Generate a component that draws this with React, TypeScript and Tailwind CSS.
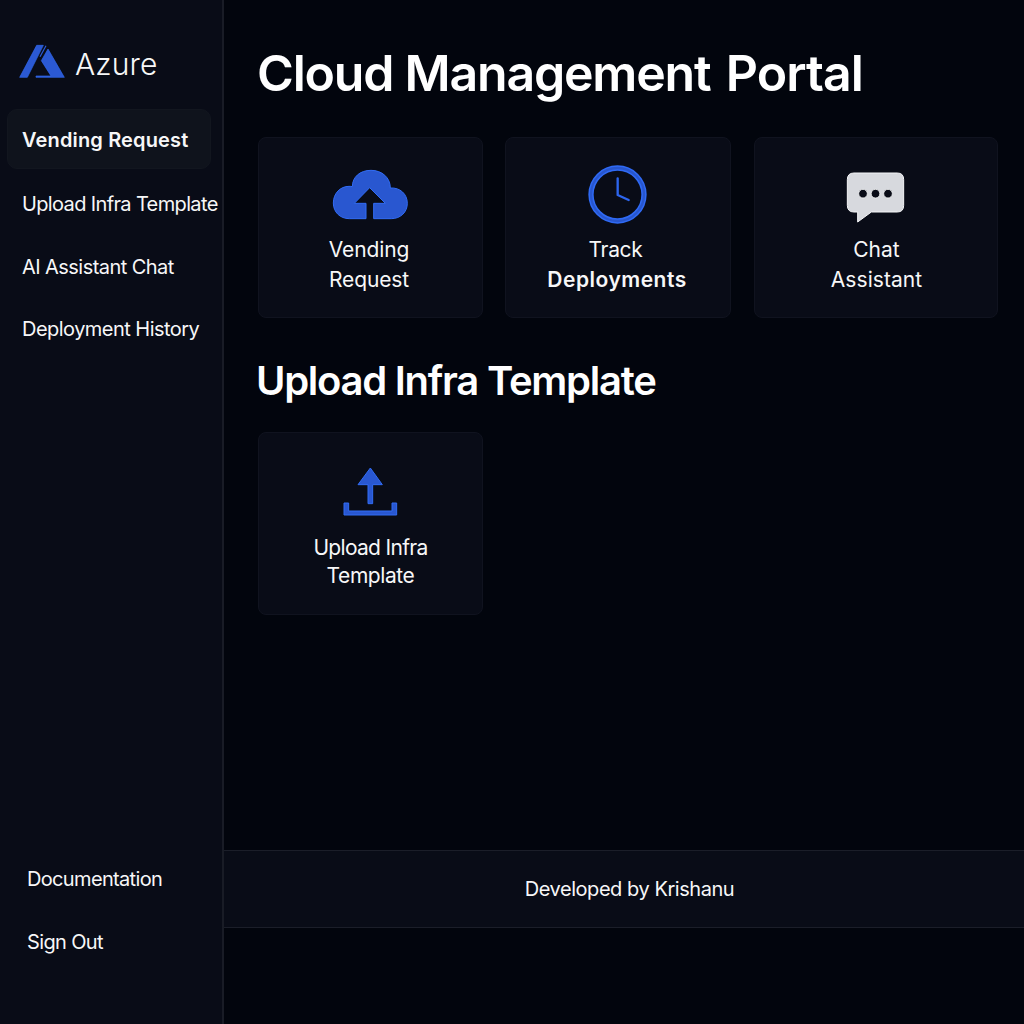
import type { ReactNode } from "react";

const LogoIcon = () => (
  <svg width="46" height="34" viewBox="56 42 138 102" className="shrink-0">
    <g fill="#2b59d3" stroke="#3069f0" strokeWidth="2">
      <path d="M109 46H129L81 142H58Z" />
      <path d="M143 57L192 142H107V138H152L123 92Z" />
    </g>
    <path d="M137 47L119 80" stroke="#2c5cdb" strokeWidth="3.5" fill="none" />
  </svg>
);

const CloudIcon = () => (
  <svg width="77" height="51" viewBox="246 117 231 153">
    <path
      d="M348 266H298C270 266 250 246 250 219C250 190 271 169 297 169C301 169 304 169 307 170C307 141 330 121 363 121C396 121 421 143 421 174C450 172 472 192 472 220C472 246 452 266 424 266H371V220H406L359 173L313 220H348Z"
      fill="#2957d0"
      stroke="#316cf5"
      strokeWidth="3"
    />
  </svg>
);

const ClockIcon = () => (
  <svg width="59" height="59" viewBox="264 105 177 177" fill="none">
    <circle cx="352.5" cy="193.5" r="79.5" stroke="#2f6af5" strokeWidth="16" />
    <circle cx="352.5" cy="193.5" r="79.5" stroke="#2856cd" strokeWidth="7" />
    <path d="M353 145V195L386 210" stroke="#2d65ee" strokeWidth="7" strokeLinecap="round" strokeLinejoin="round" />
  </svg>
);

const ChatIcon = () => (
  <svg width="59" height="51" viewBox="288 125 177 153">
    <path
      d="M312 128H442Q461 128 461 148V225Q461 245 442 245H364L323 275V245H312Q292 245 292 225V148Q292 128 312 128Z"
      fill="#d7d9de"
      stroke="#f4f5f7"
      strokeWidth="3"
    />
    <g fill="#090c17" stroke="#f4f5f7" strokeWidth="2.5">
      <circle cx="339" cy="190" r="13" />
      <circle cx="376.5" cy="190" r="13" />
      <circle cx="414" cy="190" r="13" />
    </g>
  </svg>
);

const UploadIcon = () => (
  <svg width="55" height="51" viewBox="279 124 165 153">
    <g fill="#2957d0" stroke="#316cf5" strokeWidth="3">
      <path d="M361 130L397 180H368V237H354V180H324Z" />
      <path d="M282 235H296V259H426V235H440V271H282Z" />
    </g>
  </svg>
);

function Card({
  icon,
  size,
  iconTop,
  children,
}: {
  icon: ReactNode;
  size: string;
  iconTop: string;
  children: ReactNode;
}) {
  return (
    <button
      className={`flex flex-col items-center justify-start rounded-lg border border-[#10131f] bg-[#090c17] text-[21px] ${size}`}
    >
      <span className={`flex h-[97px] shrink-0 items-start ${iconTop}`}>{icon}</span>
      {children}
    </button>
  );
}

export default function App() {
  return (
    <div className="flex h-[1024px] w-[1024px] overflow-hidden bg-[#02050d] font-['Inter',sans-serif] text-[#f7f7f8]">
      <aside className="flex w-[224px] shrink-0 flex-col border-r-2 border-[#191c26] bg-[#090c17] text-xl leading-[30px] whitespace-nowrap">
        <div className="flex h-[109px] items-start gap-2.5 pt-11 pl-[19px]">
          <LogoIcon />
          <span className="pt-0.5 text-[30px] leading-9 font-light tracking-[0.15px]">Azure</span>
        </div>
        <nav className="flex flex-col">
          <a className="ml-[7px] flex h-[60px] w-[204px] items-center rounded-[10px] border border-[#12161f] bg-[#0f131c] pt-0.5 pl-[14px] font-semibold tracking-[0.15px]">
            Vending Request
          </a>
          <a className="mt-5 pl-[22px] tracking-[-0.64px]">Upload Infra Template</a>
          <a className="mt-[33px] pl-[22px] tracking-[-0.56px]">AI Assistant Chat</a>
          <a className="mt-8 pl-[22px] tracking-[-0.53px]">Deployment History</a>
        </nav>
        <div className="mt-auto flex flex-col gap-[33px] pb-[67px] pl-[27px]">
          <a className="tracking-[-0.66px]">Documentation</a>
          <a className="tracking-[-0.64px]">Sign Out</a>
        </div>
      </aside>

      <main className="flex flex-1 flex-col">
        <div className="flex-1 pl-[34px]">
          <h1 className="-ml-px pt-[43px] text-[50px] leading-[60px] font-semibold tracking-[-1.2px] whitespace-nowrap text-white">
            Cloud Management <span className="ml-1 tracking-[-0.95px]">Portal</span>
          </h1>
          <div className="mt-[34px] flex leading-[30px]">
            <Card icon={<CloudIcon />} size="h-[181px] w-[225px]" iconTop="pt-[31px]">
              <span className="pr-[3px] tracking-[-0.1px]">
                Vending
                <br />
                Request
              </span>
            </Card>
            <Card icon={<ClockIcon />} size="ml-[22px] h-[181px] w-[226px]" iconTop="pt-[27px] pr-0.5">
              <span className="pr-[5px] tracking-[-0.3px]">Track</span>
              <span className="pr-0.5 font-semibold tracking-[0.5px]">Deployments</span>
            </Card>
            <Card icon={<ChatIcon />} size="ml-[23px] h-[181px] w-[244px]" iconTop="pt-[34px] pr-0.5">
              <span className="pl-px tracking-[0.05px]">
                Chat
                <br />
                Assistant
              </span>
            </Card>
          </div>
          <h2 className="mt-9 -ml-0.5 text-[40px] leading-[54px] font-semibold tracking-[-1.26px] text-white">
            Upload Infra Template
          </h2>
          <div className="mt-6 flex leading-7">
            <Card icon={<UploadIcon />} size="h-[183px] w-[225px]" iconTop="pt-[33px]">
              <span className="mt-1 tracking-[-0.69px]">Upload Infra</span>
              <span className="tracking-[-0.42px]">Template</span>
            </Card>
          </div>
        </div>
        <footer className="mb-24 flex h-[78px] items-center justify-center border-y border-[#1b1e29] bg-[#090c17] pl-[11px] text-xl tracking-[-0.45px]">
          Developed by Krishanu
        </footer>
      </main>
    </div>
  );
}
